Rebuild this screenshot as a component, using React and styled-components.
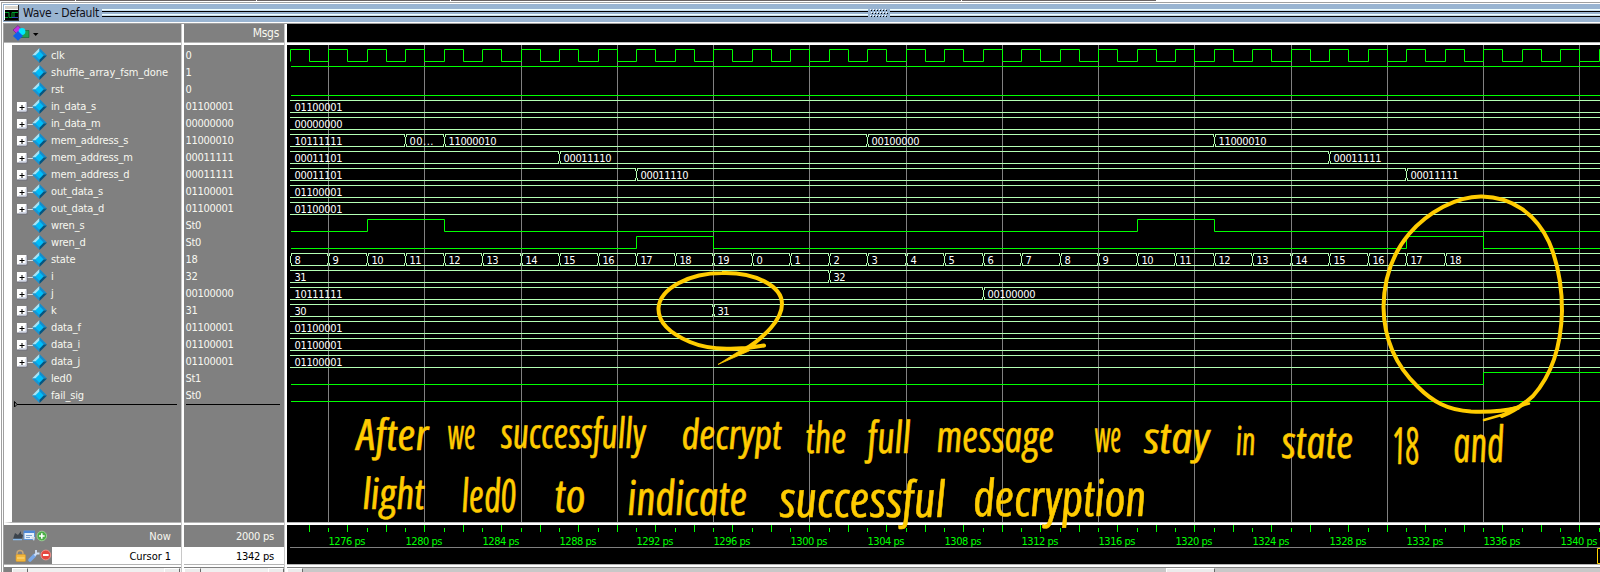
import React from "react";
import styled, { createGlobalStyle, css } from "styled-components";

const GREEN = "#00ff00";
const BUS = "#b4ffb4";
const GREY = "#808080";
const INK = "#ffcc00";

const GlobalStyle = createGlobalStyle`
  * { box-sizing: border-box; }
  html, body { margin: 0; padding: 0; background: #fff; overflow: hidden; }
`;

const Window = styled.div`
  position: relative;
  display: flex;
  flex-direction: column;
  width: 1600px;
  height: 572px;
  overflow: hidden;
  background: #fff;
  color: #f8f8f0;
  font-family: "DejaVu Sans Condensed", "DejaVu Sans", sans-serif;
  font-stretch: condensed;
  font-size: 11px;
  letter-spacing: -0.3px;
`;

const TopEdge = styled.div`
  display: flex;
  flex: none;
  width: 1156px;
  height: 1px;
  background: #6b6464;
`;
const EdgeNotch = styled.i`
  width: 1px;
  height: 1px;
  background: #fff;
  margin-left: ${(p) => p.$before}px;
`;

const Frame = styled.div`
  display: flex;
  flex-direction: column;
  flex: 1;
  margin: 1px 0 0 1px;
  border-left: 1px solid #a0a0a0;
  border-top: 1px solid #a0a0a0;
  padding: 1px 0 0 1px;
`;

const TitleBar = styled.div`
  display: flex;
  align-items: flex-start;
  height: 18px;
  background: #99b4d1;
  color: #101018;
  flex: none;
`;
const TitleIcon = styled.svg`
  flex: none;
  width: 15px;
  height: 16px;
  margin: 1px 0 0 1px;
`;
const Title = styled.div`
  width: 83px;
  padding-left: 4px;
  font-size: 12px;
  line-height: 18px;
  letter-spacing: -0.28px;
  white-space: pre;
`;
const TitleRails = styled.div`
  display: flex;
  flex: 1;
  flex-direction: column;
  gap: 2px;
  padding-top: 5px;
`;
const Rail = styled.div`
  height: 3px;
  background: linear-gradient(#f0ffff 0 1px, #c4dcec 1px 2px, #000 2px);
`;
const Grip = styled.svg`
  position: absolute;
  left: 868px;
  top: 8px;
  width: 22px;
  height: 10px;
`;

const Body = styled.div`
  display: flex;
  flex: 1;
  border-left: 1px solid #a0a0a0;
  border-top: 1px solid #a0a0a0;
  margin-top: 1px;
`;

const Pane = styled.div`
  display: flex;
  flex-direction: column;
  flex: none;
  width: ${(p) => p.$w}px;
  overflow: hidden;
`;
const Divider = styled.div`
  flex: none;
  width: 3px;
  background: linear-gradient(90deg, #c8c8c8 0 1px, #fff 1px);
`;
const band = css`
  flex: none;
  border-bottom: 1px solid #b4b4b4;
  margin-bottom: 2px;
  background: ${(p) => (p.$black ? "#000" : GREY)};
`;
const Header = styled.div`
  ${band}
  display: flex;
  align-items: center;
  justify-content: ${(p) => (p.$end ? "flex-end" : "flex-start")};
  height: 19px;
  padding: 0 5px 0 8px;
  font-size: 12px;
`;
const Content = styled.div`
  ${band}
  display: flex;
  flex-direction: column;
  height: 478px;
  padding-top: ${(p) => (p.$black ? 0 : 2)}px;
  border-left: ${(p) => p.$gutter || 0}px solid #fff;
`;
const Footer = styled.div`
  ${band}
  height: 40px;
`;
const FooterRow = styled.div`
  display: flex;
  align-items: center;
  height: ${(p) => p.$h}px;
`;
const FooterIcons = styled.svg`
  flex: none;
  width: 48px;
  height: ${(p) => p.$h}px;
`;
const FooterText = styled.div`
  flex: 1;
  height: 100%;
  display: flex;
  align-items: center;
  justify-content: flex-end;
  padding: ${(p) => (p.$selected ? 2 : 0)}px 10px 0 0;
  letter-spacing: ${(p) => p.$ls || -0.25}px;
  background: ${(p) => (p.$selected ? "#fff" : "transparent")};
  color: ${(p) => (p.$selected ? "#000" : "inherit")};
`;

const Row = styled.div`
  display: flex;
  align-items: center;
  height: 17px;
  flex: none;
  white-space: pre;
`;
const NodeIcon = styled.svg`
  flex: none;
  width: 39px;
  height: 17px;
`;
const Name = styled.span`
  letter-spacing: ${(p) => (p.$long ? 0 : -0.15)}px;
  line-height: 17px;
`;
const Value = styled.span`
  padding-left: 1.5px;
  line-height: 17px;
`;
const EndMark = styled.svg`
  display: block;
  flex: none;
  width: 100%;
  height: 8px;
  margin-top: -4px;
`;

const Scroll = styled.div`
  display: flex;
  flex: 1;
  border-top: 1px solid #808080;
  background: ${(p) => (p.$plain ? "#c8c8c8" : "#f0f0f0")};
`;
const ScrollPart = styled.div`
  width: ${(p) => p.$w}px;
  margin-left: ${(p) => p.$gap || 0}px;
  border-top: 1px solid #fff;
  border-left: 1px solid #fff;
  border-right: 1px solid #696969;
  background: #ececec;
`;
const ScrollCorner = styled.div`
  width: 8px;
  background: #808080;
`;

const Drawing = styled.svg`
  display: block;
  flex: none;
`;
const Annotation = styled.svg`
  position: absolute;
  left: 0;
  top: 0;
  width: 1600px;
  height: 572px;
  pointer-events: none;
`;

/* time (ps) to pixel column */
const X0 = 287;
const xt = (t) => Math.round(424.4 + (t - 1280) * 19.25) - X0;
const range = (a, b, s = 1) => {
  const out = [];
  for (let v = a; v <= b; v += s) out.push(v);
  return out;
};

const stateSteps = range(1273, 1333, 2).map((t, n) => [t, String((n + 8) % 20)]);

const SIGNALS = [
  { name: "clk", value: "0", clock: true },
  { name: "shuffle_array_fsm_done", value: "1", wave: [[1273, 1]] },
  { name: "rst", value: "0", wave: [[1273, 0]] },
  { name: "in_data_s", value: "01100001", bus: [[1273, "01100001"]] },
  { name: "in_data_m", value: "00000000", bus: [[1273, "00000000"]] },
  {
    name: "mem_address_s",
    value: "11000010",
    bus: [[1273, "10111111"], [1279, "00..."], [1281, "11000010"], [1303, "00100000"], [1321, "11000010"]],
  },
  { name: "mem_address_m", value: "00011111", bus: [[1273, "00011101"], [1287, "00011110"], [1327, "00011111"]] },
  { name: "mem_address_d", value: "00011111", bus: [[1273, "00011101"], [1291, "00011110"], [1331, "00011111"]] },
  { name: "out_data_s", value: "01100001", bus: [[1273, "01100001"]] },
  { name: "out_data_d", value: "01100001", bus: [[1273, "01100001"]] },
  { name: "wren_s", value: "St0", wave: [[1273, 0], [1277, 1], [1281, 0], [1317, 1], [1321, 0]] },
  { name: "wren_d", value: "St0", wave: [[1273, 0], [1291, 1], [1295, 0], [1331, 1], [1335, 0]] },
  { name: "state", value: "18", bus: stateSteps, opens: true },
  { name: "i", value: "32", bus: [[1273, "31"], [1301, "32"]] },
  { name: "j", value: "00100000", bus: [[1273, "10111111"], [1309, "00100000"]] },
  { name: "k", value: "31", bus: [[1273, "30"], [1295, "31"]] },
  { name: "data_f", value: "01100001", bus: [[1273, "01100001"]] },
  { name: "data_i", value: "01100001", bus: [[1273, "01100001"]] },
  { name: "data_j", value: "01100001", bus: [[1273, "01100001"]] },
  { name: "led0", value: "St1", wave: [[1273, 0], [1335, 1]] },
  { name: "fail_sig", value: "St0", wave: [[1273, 0]] },
];

const RIGHT = 1600 - X0;

function Scalar({ steps, top, lead }) {
  const y = (v) => top + (v ? 0.5 : 12.5);
  let d = "";
  steps.forEach(([t, v], n) => {
    const x = xt(t) + 0.5;
    if (n === 0) d += lead ? `M${x} ${top + 12.5}V${y(v)}` : `M${x + 0.5} ${y(v)}`;
    else d += `H${x}V${y(v)}`;
  });
  return <path d={d + `H${RIGHT}`} stroke={GREEN} fill="none" />;
}

function Bus({ steps, top, opens }) {
  const texts = [];
  let d = "";
  steps.forEach(([t, label], n) => {
    const x = xt(t);
    const next = steps[n + 1];
    const end = next ? xt(next[0]) - 1 : RIGHT;
    const from = n === 0 ? x + (opens ? 1 : 0) : x + 2;
    d += `M${from} ${top + 0.5}H${end}M${from} ${top + 12.5}H${end}`;
    if (n > 0)
      d += `M${x - 0.5} ${top}v3m0 7v3M${x + 1.5} ${top}v3m0 7v3M${x + 0.5} ${top + 3}v7`;
    else if (opens) d += `M${x + 1.5} ${top}v3m0 7v3M${x + 0.5} ${top + 3}v7`;
    texts.push(
      <text key={t} x={x + 4.5} y={top + 11} textLength={label === "00..." ? 24 : label.length * 6} fill="#fff">
        {label}
      </text>
    );
  });
  return (
    <g>
      <path d={d} stroke={BUS} fill="none" />
      {texts}
    </g>
  );
}

function Waves() {
  return (
    <Drawing width={RIGHT} height="477" fontSize="11" letterSpacing="0">
      <path
        d={range(1275, 1340, 5).map((t) => `M${xt(t) + 0.5} 0V477`).join("")}
        stroke="#808080"
      />
      {SIGNALS.map((s, n) => {
        const top = 4 + n * 17;
        if (s.clock)
          return <Scalar key={n} lead top={top} steps={range(1273, 1341).map((t) => [t, t % 2])} />;
        if (s.wave) return <Scalar key={n} top={top} steps={s.wave} />;
        return <Bus key={n} top={top} steps={s.bus} opens={s.opens} />;
      })}
    </Drawing>
  );
}

function Timeline() {
  return (
    <Drawing width={RIGHT} height="39" fontSize="11" letterSpacing="0">
      <path
        d={range(1274, 1341).map((t) => `M${xt(t) + 0.5} ${t % 2 ? 3 : 0}V7`).join("")}
        stroke={GREEN}
      />
      {range(1276, 1340, 4).map((t) => (
        <text key={t} x={xt(t) - 18.5} y="20" fill={GREEN} textLength="37">
          {t + " ps"}
        </text>
      ))}
      <path d={`M3 22.5H${RIGHT}`} stroke="#808080" />
      <path d={`M${RIGHT + 2} 23.5H${RIGHT - 2.5}V38.5H${RIGHT + 2}`} stroke="#ffd200" fill="none" />
    </Drawing>
  );
}

function Diamond({ bus }) {
  return (
    <NodeIcon viewBox="0 0 39 17">
      {bus && (
        <g>
          <path d="M15 9.5h6" stroke="#d8dde2" />
          <rect x="5" y="4" width="10.5" height="10.5" fill="#6c6c78" />
          <rect x="5" y="4" width="9.5" height="9.5" fill="#fff" />
          <path d="M7 12.8h7v-7" stroke="#c4cce0" fill="none" />
          <path d="M7.500 9.500h5M10 7v5" stroke="#000" />
        </g>
      )}
      <path d="M27.500 1L20 8.500H27.500Z" fill="#a4e4f8" />
      <path d="M27.500 1L35 8.500H27.500Z" fill="#128dcc" />
      <path d="M27.500 16L20 8.500H27.500Z" fill="#1795d4" />
      <path d="M27.500 16L35 8.500H27.500Z" fill="#06557f" />
      <path d="M27.500 4.300L31.700 8.500L27.500 12.700L23.300 8.500Z" fill="#00bdf8" />
    </NodeIcon>
  );
}

/* word, left, baseline, width, font size */
const WORDS = [
  ["After", 358, 450, 72, 43],
  ["we", 449, 449, 28, 43],
  ["successfully", 502, 448, 145, 42],
  ["decrypt", 683, 449, 100, 41],
  ["the", 807, 453, 41, 43],
  ["full", 869, 453, 43, 44],
  ["message", 938, 452, 118, 44],
  ["we", 1096, 452, 27, 44],
  ["stay", 1145, 453, 66, 43],
  ["in", 1237, 455, 20, 40],
  ["state", 1283, 458, 72, 45],
  ["18", 1394, 464, 27, 51],
  ["and", 1455, 462, 51, 50],
  ["light", 364, 509, 62, 43],
  ["led0", 463, 512, 55, 46],
  ["to", 556, 512, 31, 46],
  ["indicate", 629, 515, 120, 48],
  ["successful", 781, 517, 166, 50],
  ["decryption", 975, 516, 173, 51],
];

function Notes() {
  return (
    <Annotation>
      <g fill="none" stroke={INK} strokeLinecap="round" strokeLinejoin="round">
        <path
          strokeWidth="4"
          d="M764 345.500C742 350 711 351 690 342C669 333 658 321 658.500 308C660 288 690 273 722 273C755 272 782 286 782 304C782 320 764 337 746 349"
        />
        <path d="M747 346L718 364.500L749 351Z" fill={INK} strokeWidth=".8" />
        <path
          strokeWidth="4"
          d="M1518 408C1500 412 1485 412 1471 411.500C1447 410 1432 401 1418 387C1397 367 1384 342 1383.500 307C1384 276 1393 253 1409 234C1428 212 1457 196 1482 196.500C1512 197 1536 214 1549 242C1558 263 1562 285 1562 311C1561 351 1549 378 1533 396C1523 405 1514 411 1502 416"
        />
        <path strokeWidth="2.500" d="M1529 403.500L1510 409M1505 414L1484 420" />
      </g>
      <g
        fill={INK}
        stroke={INK}
        strokeWidth=".5"
        strokeLinejoin="round"
        fontFamily='"Open Sans", "Noto Sans", sans-serif'
        fontStyle="italic"
        letterSpacing="0"
      >
        {WORDS.map(([w, x, y, len, size]) => (
          <text
            key={w + x}
            transform={`translate(${x} ${y}) skewX(7)`}
            fontSize={size}
            textLength={len}
            lengthAdjust="spacingAndGlyphs"
          >
            {w}
          </text>
        ))}
      </g>
    </Annotation>
  );
}

const gripDots = (dx, dy) =>
  [0, 1, 2]
    .flatMap((r) => range(0, 5).map((c) => `M${2 + (r % 2) + c * 3 + dx} ${1.5 + r * 3 + dy}h1`))
    .join("");

export default function App() {
  return (
    <Window>
      <GlobalStyle />
      <TopEdge>
        <EdgeNotch $before={75} />
        <EdgeNotch $before={180} />
        <EdgeNotch $before={193} />
        <EdgeNotch $before={510} />
      </TopEdge>
      <Frame>
        <TitleBar>
          <TitleIcon viewBox="0 0 15 16">
            <rect width="15" height="16" fill="#333" />
            <rect width="14" height="15" fill="#fff" />
            <rect x="1" y="1" width="13" height="3" fill="#d8d4cc" />
            <rect x="1" y="5" width="13" height="10" fill="#000" />
            <path d="M1 7.500h4v5h3v-5h2v5M10 7.500h4M1 12.500h3" stroke="#00a030" fill="none" />
            <path d="M8 12.500h6" stroke="#3048c0" />
          </TitleIcon>
          <Title>Wave - Default</Title>
          <TitleRails>
            <Rail />
            <Rail />
          </TitleRails>
        </TitleBar>
        <Body>
          <Pane $w={177}>
            <Header>
              <svg width="28" height="18" viewBox="0 0 28 18">
                <path d="M1 6L6 1.500L10 6L5 10Z" fill="#c030e0" stroke="#602080" strokeWidth=".6" />
                <path d="M10 6.500h7v7h-8z" fill="#20a050" stroke="#106030" strokeWidth=".6" />
                <circle cx="10" cy="7.500" r="3.400" fill="#00e8ff" />
                <path d="M1 12L6 7L11 12L6 16.800Z" fill="#1060e8" />
                <path d="M21 9h5.500L23.700 12Z" fill="#000" />
              </svg>
            </Header>
            <Content $gutter={8}>
              {SIGNALS.map((s) => (
                <Row key={s.name}>
                  <Diamond bus={Boolean(s.bus)} />
                  <Name $long={s.name.length > 14}>{s.name}</Name>
                </Row>
              ))}
              <EndMark>
                <path d="M2.500 1.500V7L5 4.500L2.500 1.500M5 4.500H165" stroke="#000" fill="none" />
              </EndMark>
            </Content>
            <Footer>
              <FooterRow $h={22}>
                <FooterIcons $h={22} viewBox="0 0 48 22">
                  <path d="M9 14l2-6 3 2 3-4v3l2 1-1 4z" fill="#3c444c" />
                  <path d="M9 14.500h9" stroke="#88b8e8" strokeWidth="1.500" />
                  <rect x="20" y="6" width="10.500" height="8.500" fill="#e4f0fc" stroke="#5c94d8" />
                  <path d="M20 7h11" stroke="#4c88d8" strokeWidth="2" />
                  <path d="M22 10.500h6M22 12.500h4" stroke="#7ca4d0" />
                  <path d="M27 12l3 4 1-4z" fill="#d8dce4" />
                  <circle cx="37.800" cy="11" r="4.800" fill="#4cae48" stroke="#a8d8a0" strokeWidth=".8" />
                  <path d="M35 11h5.600M37.800 8.200v5.600" stroke="#fff" strokeWidth="1.600" />
                </FooterIcons>
                <FooterText $ls={0.05}>Now</FooterText>
              </FooterRow>
              <FooterRow $h={17}>
                <FooterIcons $h={17} viewBox="0 -0.500 48 17">
                  <path d="M13 8V6a3 3 0 0 1 6 0v2" stroke="#c8a878" strokeWidth="1.400" fill="none" />
                  <rect x="12" y="7" width="9.500" height="7" rx="1" fill="#f4b83c" stroke="#d89828" strokeWidth=".6" />
                  <path d="M13 10.500h7.500" stroke="#ffe088" />
                  <path d="M26 12.500l4.500-4.500" stroke="#78a8e8" strokeWidth="3.600" strokeLinecap="round" />
                  <path d="M30.500 8l2-2M32 2.500v3.500h3.500" stroke="#d0e0f4" strokeWidth="1.800" fill="none" />
                  <circle cx="41.800" cy="7.500" r="4.900" fill="#e44840" stroke="#f4a098" strokeWidth=".8" />
                  <path d="M39 7.500h5.600" stroke="#fff" strokeWidth="2" />
                </FooterIcons>
                <FooterText $selected $ls={-0.05}>Cursor 1</FooterText>
              </FooterRow>
            </Footer>
            <Scroll>
              <ScrollCorner />
              <ScrollPart $w={16} />
              <ScrollPart $w={16} $gap={136} />
            </Scroll>
          </Pane>
          <Divider />
          <Pane $w={100}>
            <Header $end>Msgs</Header>
            <Content>
              {SIGNALS.map((s) => (
                <Row key={s.name}>
                  <Value>{s.value}</Value>
                </Row>
              ))}
              <EndMark>
                <path d="M2 4.500H96" stroke="#000" />
              </EndMark>
            </Content>
            <Footer>
              <FooterRow $h={22}>
                <FooterText>2000 ps</FooterText>
              </FooterRow>
              <FooterRow $h={17}>
                <FooterText $selected>1342 ps</FooterText>
              </FooterRow>
            </Footer>
            <Scroll>
              <ScrollPart $w={17} />
              <ScrollPart $w={16} $gap={67} />
            </Scroll>
          </Pane>
          <Divider />
          <Pane $w={RIGHT}>
            <Header $black />
            <Content $black>
              <Waves />
            </Content>
            <Footer $black>
              <Timeline />
            </Footer>
            <Scroll $plain>
              <ScrollPart $w={16} />
              <ScrollPart $w={49} $gap={863} />
            </Scroll>
          </Pane>
        </Body>
      </Frame>
      <Grip>
        <rect width="22" height="10" fill="#99b4d1" />
        <path d={gripDots(0, 0)} stroke="#fff" />
        <path d={gripDots(1, 1)} stroke="#000" />
      </Grip>
      <Notes />
    </Window>
  );
}
